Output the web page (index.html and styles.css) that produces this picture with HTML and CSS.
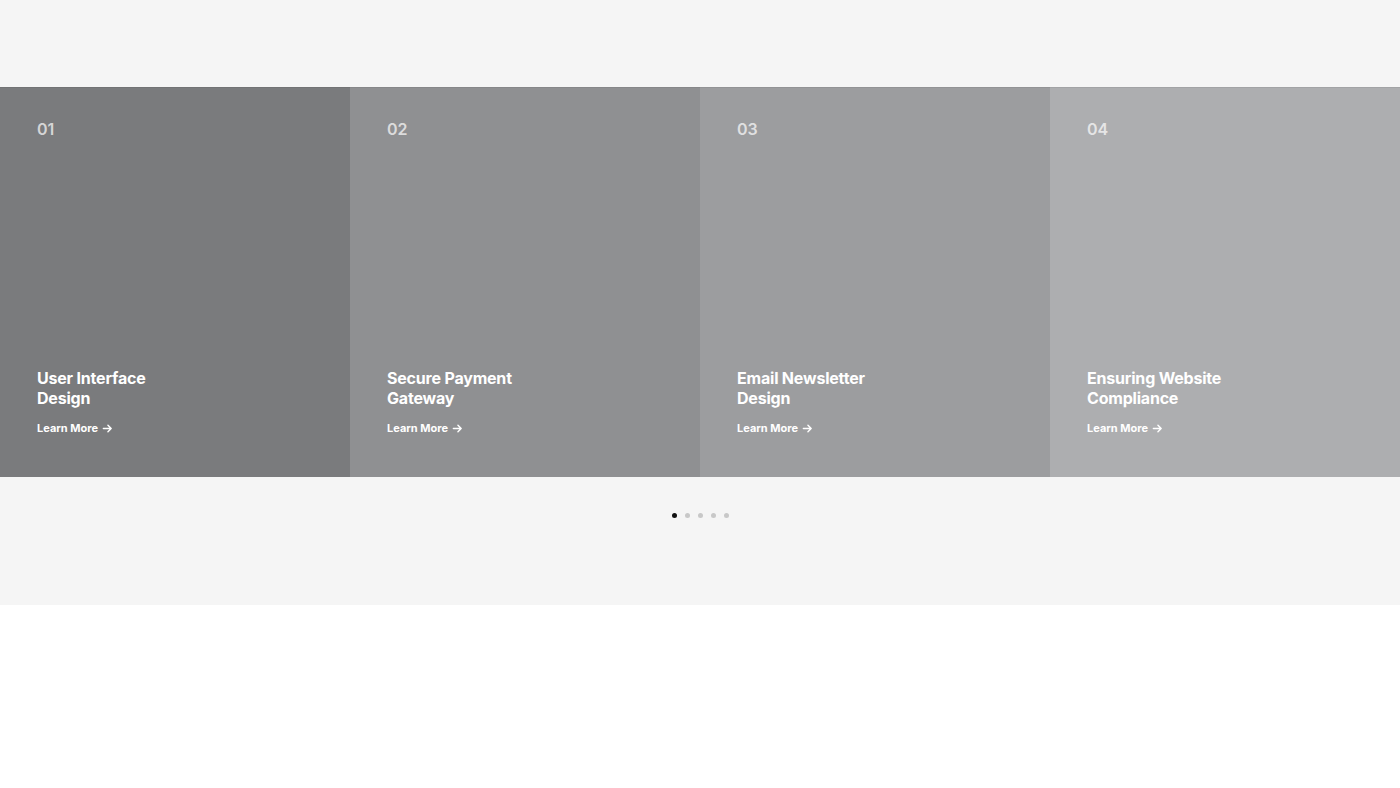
FILE: index.html
```html
<!DOCTYPE html>
<html>
  <head>
    <meta charset="UTF-8">
    <title>Services</title>
    <link rel="stylesheet" href="styles.css">
  </head>
  <body>
    <section class="services">
      <div class="cards">
        <div class="card card-1">
          <span class="num">01</span>
          <div class="card-bottom">
            <h3 class="title">User Interface Design</h3>
            <a class="more" href="#">Learn More <svg width="11" height="11" viewBox="0 0 12 12"><path d="M1.5 6h8.5M6.5 2.5 10 6l-3.5 3.5" fill="none" stroke="currentColor" stroke-width="1.6" stroke-linecap="round" stroke-linejoin="round"/></svg></a>
          </div>
        </div>
        <div class="card card-2">
          <span class="num">02</span>
          <div class="card-bottom">
            <h3 class="title">Secure Payment Gateway</h3>
            <a class="more" href="#">Learn More <svg width="11" height="11" viewBox="0 0 12 12"><path d="M1.5 6h8.5M6.5 2.5 10 6l-3.5 3.5" fill="none" stroke="currentColor" stroke-width="1.6" stroke-linecap="round" stroke-linejoin="round"/></svg></a>
          </div>
        </div>
        <div class="card card-3">
          <span class="num">03</span>
          <div class="card-bottom">
            <h3 class="title">Email Newsletter Design</h3>
            <a class="more" href="#">Learn More <svg width="11" height="11" viewBox="0 0 12 12"><path d="M1.5 6h8.5M6.5 2.5 10 6l-3.5 3.5" fill="none" stroke="currentColor" stroke-width="1.6" stroke-linecap="round" stroke-linejoin="round"/></svg></a>
          </div>
        </div>
        <div class="card card-4">
          <span class="num">04</span>
          <div class="card-bottom">
            <h3 class="title">Ensuring Website Compliance</h3>
            <a class="more" href="#">Learn More <svg width="11" height="11" viewBox="0 0 12 12"><path d="M1.5 6h8.5M6.5 2.5 10 6l-3.5 3.5" fill="none" stroke="currentColor" stroke-width="1.6" stroke-linecap="round" stroke-linejoin="round"/></svg></a>
          </div>
        </div>
      </div>
      <div class="dots">
        <span class="dot active"></span>
        <span class="dot"></span>
        <span class="dot"></span>
        <span class="dot"></span>
        <span class="dot"></span>
      </div>
    </section>
  </body>
</html>
```
FILE: styles.css
```css
body {
  margin: 0;
  padding: 0;
  background: #ffffff;
  font-family: Inter, "Noto Sans", sans-serif;
}
.services {
  background: #f5f5f5;
  padding-top: 87px;
  height: 518px;
}
.cards {
  display: grid;
  grid-template-columns: repeat(4, 1fr);
  height: 390px;
}
.card {
  display: flex;
  flex-direction: column;
  justify-content: space-between;
  padding: 31px 37px 41px;
  border-top: 1px solid rgba(0, 0, 0, 0.06);
}
.card-1 { background: #7a7b7d; }
.card-2 { background: #8f9092; }
.card-3 { background: #9c9d9f; }
.card-4 { background: #adaeb0; }
.num {
  font-size: 16px;
  font-weight: 600;
  color: rgba(255, 255, 255, 0.7);
}
.title {
  margin: 0 0 8px;
  max-width: 160px;
  font-size: 16px;
  line-height: 20px;
  font-weight: 700;
  letter-spacing: -0.2px;
  color: #ffffff;
}
.more {
  display: inline-flex;
  align-items: center;
  gap: 4px;
  font-size: 11px;
  font-weight: 700;
  color: #ffffff;
  text-decoration: none;
}
.dots {
  display: flex;
  justify-content: center;
  gap: 8px;
  margin-top: 36px;
}
.dot {
  width: 5px;
  height: 5px;
  border-radius: 50%;
  background: #c8c8c8;
}
.dot.active {
  background: #111111;
}
```
